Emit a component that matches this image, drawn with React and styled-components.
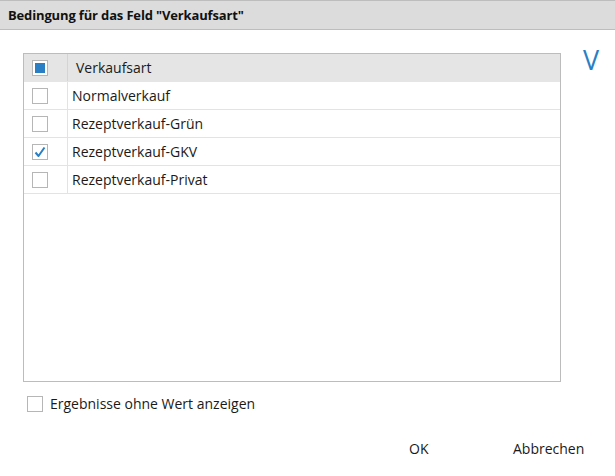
import React from "react";
import styled, { createGlobalStyle } from "styled-components";

const Global = createGlobalStyle`
  html, body { margin: 0; padding: 0; background: #fff; }
  body { font-family: "Open Sans", "Noto Sans", sans-serif; color: #1a1a1a; }
`;

const Dialog = styled.div`
  width: 615px;
  height: 476px;
  display: flex;
  flex-direction: column;
  background: #fff;
`;

const TitleBar = styled.div`
  height: 28px;
  border-top: 1px solid #bdbdbd;
  border-bottom: 1px solid #bdbdbd;
  background: #dcdcdc;
  display: flex;
  align-items: center;
  padding-left: 8px;
  font-weight: 700;
  font-size: 13px;
  letter-spacing: -0.15px;
  color: #111;
`;

const Body = styled.div`
  display: flex;
  padding: 23px 0 0 23px;
  gap: 22px;
`;

const Grid = styled.div`
  width: 536px;
  height: 327px;
  border: 1px solid #bcbcbc;
  display: flex;
  flex-direction: column;
`;

const Row = styled.div`
  display: grid;
  grid-template-columns: 44px 1fr;
  height: 27px;
  border-bottom: 1px solid ${(p) => (p.$header ? "#e5e5e5" : "#e3e3e3")};
  background: ${(p) => (p.$header ? "#e5e5e5" : "#fff")};
`;

const CheckCell = styled.div`
  display: flex;
  align-items: center;
  padding-left: 8px;
  border-right: 1px solid ${(p) => (p.$header ? "#d4d4d4" : "#e3e3e3")};
`;

const Cell = styled.div`
  display: flex;
  align-items: center;
  padding-left: ${(p) => (p.$header ? "8px" : "4px")};
  font-size: 14px;
  color: #1a1a1a;
`;

const Box = styled.div`
  width: 14px;
  height: 14px;
  border: 1px solid #b6b6b6;
  background: #fff;
  display: flex;
  align-items: center;
  justify-content: center;
  flex: none;
`;

const Fill = styled.div`
  width: 10px;
  height: 10px;
  background: #2a7fc4;
`;

const SideLetter = styled.div`
  font-size: 27px;
  font-weight: 400;
  color: #2a7fc4;
  line-height: 1;
  margin-top: -7px;
  font-family: "Open Sans", sans-serif;
`;

const Option = styled.label`
  display: flex;
  align-items: center;
  gap: 7px;
  padding: 12px 0 0 27px;
  font-size: 14px;
  color: #1a1a1a;
`;

const Footer = styled.div`
  display: flex;
  justify-content: flex-end;
  padding: 26px 30px 0 0;
`;

const Button = styled.div`
  font-size: 14px;
  color: #1a1a1a;
  width: ${(p) => p.$w}px;
`;

const Check = () => (
  <svg width="14" height="14" viewBox="0 0 14 14">
    <path d="M2.5 7.5 L5.5 11 L11.5 2.5" fill="none" stroke="#2a7fc4" strokeWidth="2" strokeLinejoin="round" />
  </svg>
);

const rows = [
  { label: "Normalverkauf", checked: false },
  { label: "Rezeptverkauf-Grün", checked: false },
  { label: "Rezeptverkauf-GKV", checked: true },
  { label: "Rezeptverkauf-Privat", checked: false },
];

export default function App() {
  return (
    <Dialog>
      <Global />
      <TitleBar>Bedingung für das Feld "Verkaufsart"</TitleBar>
      <Body>
        <Grid>
          <Row $header>
            <CheckCell $header>
              <Box>
                <Fill />
              </Box>
            </CheckCell>
            <Cell $header>Verkaufsart</Cell>
          </Row>
          {rows.map((r) => (
            <Row key={r.label}>
              <CheckCell>
                <Box>{r.checked && <Check />}</Box>
              </CheckCell>
              <Cell>{r.label}</Cell>
            </Row>
          ))}
        </Grid>
        <SideLetter>V</SideLetter>
      </Body>
      <Option>
        <Box />
        Ergebnisse ohne Wert anzeigen
      </Option>
      <Footer>
        <Button $w={104}>OK</Button>
        <Button $w={72}>Abbrechen</Button>
      </Footer>
    </Dialog>
  );
}
